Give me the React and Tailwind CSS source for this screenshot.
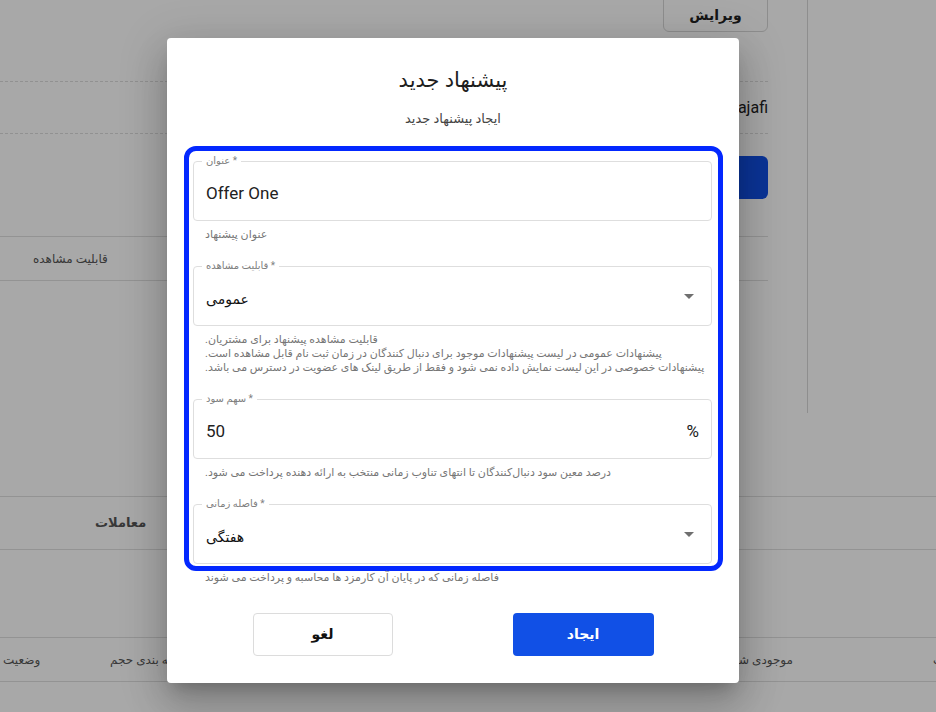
const ArrowDrop = () => (
    <svg viewBox="0 0 24 24" className="h-6 w-6 fill-[#6f6f6f]">
        <path d="M7 10l5 5 5-5z" />
    </svg>
);

const Field = ({ label, children, right }) => (
    <div className="relative flex h-[60px] items-center justify-between rounded-[4px] border border-[#dedede] pl-[12px] pr-[10px]">
        <span className="absolute -top-[7px] left-[8px] bg-white px-[4px] text-[10px] leading-[12px] text-[#808080]">
            {label} *
        </span>
        {children}
        {right}
    </div>
);

const Helper = ({ lines, className = '' }) => (
    <div className={`text-[11px] leading-[14px] text-[#767676] ${className}`}>
        {lines.map((line) => (
            <p key={line} dir="rtl" className="text-left">{line}</p>
        ))}
    </div>
);

const Background = () => (
    <div className="flex h-full flex-col text-[#333]">
        <div className="flex h-[413px]">
            <div className="flex w-[768px] flex-col">
                <div className="flex justify-end">
                    <button className="-mt-[8px] h-[40px] w-[105px] rounded-md border border-[#d6d6d6] pt-[6px] text-[14px] font-bold text-[#222]">ویرایش</button>
                </div>
                <div className="mt-[49px] border-t border-dashed border-[#dcdcdc]" />
                <div className="flex h-[51px] items-center justify-end text-[16px] text-[#222]">Reza Najafi</div>
                <div className="border-t border-dashed border-[#dcdcdc]" />
                <div className="mt-[22px] flex justify-end">
                    <div className="h-[43px] w-[340px] rounded-md bg-[#1150e6]" />
                </div>
                <div className="mt-[37px] border-t border-[#e0e0e0]" />
                <div className="flex h-[43px] items-center pl-[33px] text-[12px] text-[#555]">قابلیت مشاهده</div>
                <div className="border-t border-[#e0e0e0]" />
            </div>
            <div className="ml-[39px] flex-1 border-l border-[#d8d8d8]" />
        </div>
        <div className="mt-[83px] border-t border-[#e0e0e0]" />
        <div className="flex h-[52px] items-center pl-[95px] text-[13px] font-bold text-[#555]">معاملات</div>
        <div className="border-t border-[#e0e0e0]" />
        <div className="mt-[87px] border-t border-[#e0e0e0]" />
        <div className="flex h-[43px] items-center whitespace-nowrap text-[12px] text-[#555]">
            <span className="w-[60px] pl-[3px]">وضعیت</span>
            <span className="ml-[50px]">دسته بندی حجم</span>
            <span className="ml-auto">موجودی شما</span>
            <span className="ml-[140px] w-[3px] overflow-hidden">ردیف</span>
        </div>
        <div className="border-t border-[#e0e0e0]" />
    </div>
);

export default function App() {
    return (
        <div className="relative h-[712px] w-[936px] overflow-hidden bg-white font-[family-name:Roboto,'DejaVu_Sans',sans-serif]">
            <Background />
            <div className="absolute inset-0 bg-black/[0.34]" />

            <div className="absolute inset-0 flex items-start pl-[167px] pt-[38px]">
                <div className="w-[572px] rounded-[4px] bg-white shadow-[0_11px_15px_-7px_rgba(0,0,0,0.2),0_24px_38px_3px_rgba(0,0,0,0.14),0_9px_46px_8px_rgba(0,0,0,0.12)]">
                    <div className="pt-[27px] text-center">
                        <h2 className="text-[21px] leading-[30px] text-[#1d1d1d]">پیشنهاد جدید</h2>
                        <p className="mt-[15px] text-[13px] leading-[18px] text-[#444]">ایجاد پیشنهاد جدید</p>
                    </div>

                    <div className="ml-[17px] mr-[16px] mt-[18px] rounded-[12px] border-[5px] border-[#0328ff] pb-[2px] pl-[4px] pr-[6px] pt-[10px]">
                        <Field label="عنوان">
                            <span className="pt-[5px] text-[17px] text-[#222]">Offer One</span>
                        </Field>
                        <Helper className="mt-[7px] pl-[12px]" lines={['عنوان پیشنهاد']} />

                        <div className="mt-[24px]">
                            <Field label="قابلیت مشاهده" right={<ArrowDrop />}>
                                <span className="pt-[6px] text-[14px] text-[#111]">عمومی</span>
                            </Field>
                        </div>
                        <Helper
                            className="mt-[7px] pl-[12px]"
                            lines={[
                                'قابلیت مشاهده پیشنهاد برای مشتریان.',
                                'پیشنهادات عمومی در لیست پیشنهادات موجود برای دنبال کنندگان در زمان ثبت نام قابل مشاهده است.',
                                'پیشنهادات خصوصی در این لیست نمایش داده نمی شود و فقط از طریق لینک های عضویت در دسترس می باشد.',
                            ]}
                        />

                        <div className="mt-[24px]">
                            <Field label="سهم سود" right={<span className="pr-[2px] pt-[6px] text-[17px] text-[#222]">%</span>}>
                                <span className="pt-[6px] text-[17px] text-[#222]">50</span>
                            </Field>
                        </div>
                        <Helper
                            className="mt-[7px] pl-[12px]"
                            lines={['درصد معین سود دنبال‌کنندگان تا انتهای تناوب زمانی منتخب به ارائه دهنده پرداخت می شود.']}
                        />

                        <div className="mt-[24px]">
                            <Field label="فاصله زمانی" right={<ArrowDrop />}>
                                <span className="pt-[6px] text-[14px] text-[#111]">هفتگی</span>
                            </Field>
                        </div>
                    </div>
                    <Helper className="pl-[38px]" lines={['فاصله زمانی که در پایان آن کارمزد ها محاسبه و پرداخت می شوند']} />

                    <div className="mt-[28px] flex justify-center gap-[120px] pb-[27px]">
                        <button className="h-[43px] w-[140px] rounded-[4px] border border-[#dcdcdc] bg-white text-[14px] font-bold text-[#111]">لغو</button>
                        <button className="h-[43px] w-[141px] rounded-[4px] bg-[#1150e6] text-[14px] font-bold text-white">ایجاد</button>
                    </div>
                </div>
            </div>
        </div>
    );
}
